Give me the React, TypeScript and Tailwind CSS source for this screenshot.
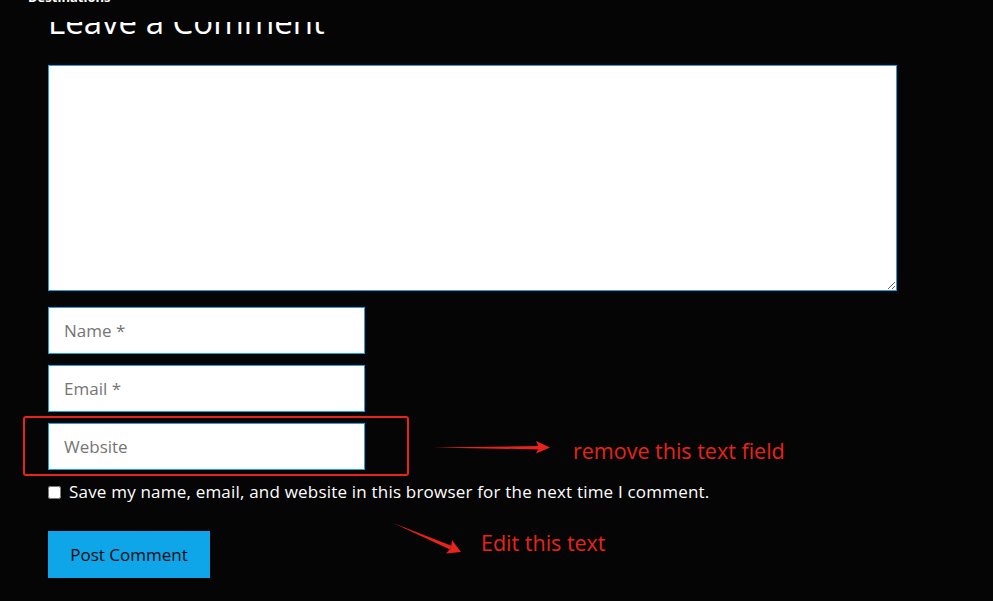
export default function App() {
	return (
		<div className="relative h-[601px] w-[993px] overflow-hidden bg-[#050505] font-['Open_Sans',sans-serif] text-white">
			<div className="pl-[48px] pr-[96px] pt-[2px]">
				<h2 className="text-[33px] leading-[40px] font-normal">Leave a Comment</h2>

				<form className="mt-[23px] flex flex-col">
					<textarea className="h-[226px] w-[849px] resize-y border border-[#1ba1e2] bg-white outline-none" />

					<div className="mt-[16px] flex flex-col gap-[11px]">
						<input
							type="text"
							placeholder="Name *"
							className="h-[47px] w-[317px] border border-[#1ba1e2] bg-white px-[15px] text-[17px] text-black outline-none placeholder:text-[#757575]"
						/>
						<input
							type="text"
							placeholder="Email *"
							className="h-[47px] w-[317px] border border-[#1ba1e2] bg-white px-[15px] text-[17px] text-black outline-none placeholder:text-[#757575]"
						/>
						<input
							type="text"
							placeholder="Website"
							className="h-[47px] w-[317px] border border-[#1ba1e2] bg-white px-[15px] text-[17px] text-black outline-none placeholder:text-[#757575]"
						/>
					</div>

					<label className="mt-[10px] flex items-center gap-[8px] text-[17px] leading-[24px] tracking-[0.2px]">
						<input type="checkbox" className="h-[13px] w-[13px]" />
						Save my name, email, and website in this browser for the next time I comment.
					</label>

					<div className="mt-[27px]">
						<button type="button" className="h-[47px] w-[162px] bg-[#0ea5e9] text-[17px] text-[#0b0b0b]">
							Post Comment
						</button>
					</div>
				</form>
			</div>

			{/* sticky site header, scrolled over the heading */}
			<div className="absolute left-0 right-0 top-0 h-[22px] bg-[#050505]">
				<div className="-mt-[11px] pl-[28px] text-[13px] font-bold leading-[16px]">Destinations</div>
			</div>

			{/* annotations */}
			<div className="absolute left-[23px] top-[416px] h-[60px] w-[386px] rounded-[3px] border-[2.5px] border-[#e8231b]" />
			<svg className="absolute left-[430px] top-[438px]" width="124" height="20" viewBox="0 0 124 20">
				<path d="M3 9.6 L109 8 L109 11.4 Z" fill="#e8231b" />
				<path d="M106 3 L120 9.5 L106 15.5 L109 9.5 Z" fill="#e8231b" />
			</svg>
			<div className="absolute left-[573px] top-[437px] text-[21.5px] leading-[28px] text-[#e8231b]">remove this text field</div>

			<svg className="absolute left-[392px] top-[520px]" width="72" height="36" viewBox="0 0 72 36">
				<path d="M1 3 L60 26 L58 29.5 Z" fill="#e8231b" />
				<path d="M60 20 L69 32 L54 33.5 L59 28 Z" fill="#e8231b" />
			</svg>
			<div className="absolute left-[481px] top-[529px] text-[21.5px] leading-[28px] text-[#e8231b]">Edit this text</div>
		</div>
	);
}
